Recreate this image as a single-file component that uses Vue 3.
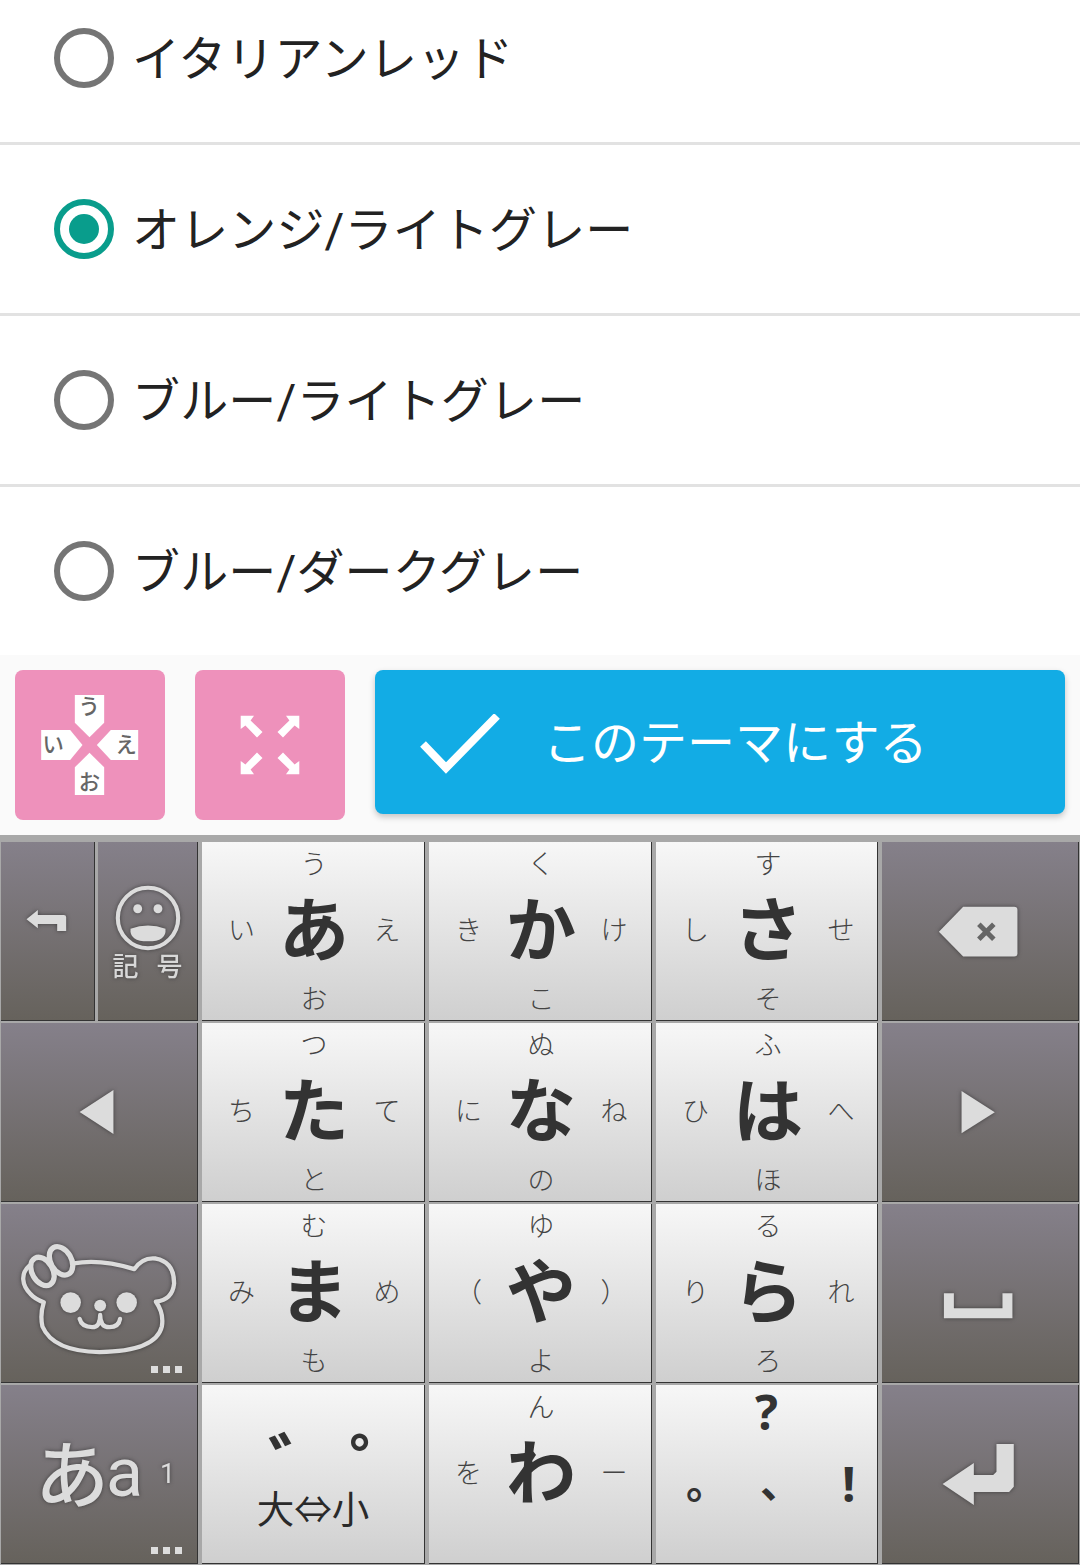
<script setup>
const themes = [
  { name: 'イタリアンレッド', on: false },
  { name: 'オレンジ/ライトグレー', on: true },
  { name: 'ブルー/ライトグレー', on: false },
  { name: 'ブルー/ダークグレー', on: false },
]
const k = (main, t, l, r, b) => ({ main, t, l, r, b })
const row1 = [k('あ', 'う', 'い', 'え', 'お'), k('か', 'く', 'き', 'け', 'こ'), k('さ', 'す', 'し', 'せ', 'そ')]
const row2 = [k('た', 'つ', 'ち', 'て', 'と'), k('な', 'ぬ', 'に', 'ね', 'の'), k('は', 'ふ', 'ひ', 'へ', 'ほ')]
const row3 = [k('ま', 'む', 'み', 'め', 'も'), k('や', 'ゆ', '（', '）', 'よ'), k('ら', 'る', 'り', 'れ', 'ろ')]
const wa = k('わ', 'ん', 'を', 'ー', '')
const arrow = 'M45.7 45.7H59L55.6 50.4L67.5 62L62 67.5L50.4 55.6L45.7 59Z'
</script>

<template>
  <div class="page">
    <ul class="list">
      <li v-for="t in themes" :key="t.name" class="row">
        <span class="radio" :class="{ on: t.on }"></span>
        <span class="label">{{ t.name }}</span>
      </li>
    </ul>

    <div class="toolbar">
      <div class="pink">
        <svg class="full" viewBox="45 60 435 450">
          <path class="w" d="M217 135H305V218L261 262L217 218Z" />
          <path class="w" d="M116 240H203L240 285L203 330H116Z" />
          <path class="w" d="M407 240V330H325L283 285L325 240Z" />
          <path class="w" d="M217 435V352L261 308L305 352V435Z" />
          <text class="flick" x="260" y="191">う</text>
          <text class="flick" x="152" y="307">い</text>
          <text class="flick" x="371" y="307">え</text>
          <text class="flick" x="261" y="420">お</text>
        </svg>
      </div>
      <div class="pink">
        <svg class="full" viewBox="0 0 150 150">
          <path class="w" :d="arrow" />
          <path class="w" :d="arrow" transform="translate(150 0) scale(-1 1)" />
          <path class="w" :d="arrow" transform="translate(0 150) scale(1 -1)" />
          <path class="w" :d="arrow" transform="translate(150 150) scale(-1 -1)" />
        </svg>
      </div>
      <button class="apply">
        <svg class="check" viewBox="0 0 80 62"><path d="M3 30L26 54L77 2" /></svg>
        <span class="applytext">このテーマにする</span>
      </button>
    </div>

    <div class="keyboard">
      <div class="pair">
        <div class="key dark">
          <svg class="full glow" viewBox="6 576 270 534">
            <path class="ic" d="M78 808L112 780V795H190Q197 795 197 802V843H170V822H112V835Z" />
          </svg>
        </div>
        <div class="key dark symbol">
          <svg class="smile glow" viewBox="329 703 204 204">
            <circle cx="431" cy="805" r="88" class="ring" />
            <circle cx="401" cy="778" r="13" class="ic" />
            <circle cx="460" cy="778" r="13" class="ic" />
            <path class="ic" d="M380 836Q431 818 482 836Q486 873 431 873Q376 873 380 836Z" />
          </svg>
          <span class="symtext glow"><span>記</span><span>号</span></span>
        </div>
      </div>

      <div v-for="x in row1" :key="x.main" class="key light kana">
        <span class="top">{{ x.t }}</span><span class="left">{{ x.l }}</span><b class="main">{{ x.main }}</b><span class="right">{{ x.r }}</span><span class="bottom">{{ x.b }}</span>
      </div>
      <div class="key dark">
        <svg class="full glow" viewBox="726 36 589 534">
          <path class="ic" d="M897 305L970 230H1123Q1133 230 1133 240V370Q1133 380 1123 380H970Z" />
          <path class="xx" d="M1017 283L1062 328M1062 283L1017 328" />
        </svg>
      </div>

      <div class="key dark">
        <svg class="full glow" viewBox="0 0 591 534">
          <path class="ic" d="M237 267L339 201V333Z" />
        </svg>
      </div>
      <div v-for="x in row2" :key="x.main" class="key light kana">
        <span class="top">{{ x.t }}</span><span class="left">{{ x.l }}</span><b class="main">{{ x.main }}</b><span class="right">{{ x.r }}</span><span class="bottom">{{ x.b }}</span>
      </div>
      <div class="key dark">
        <svg class="full glow" viewBox="726 579 589 534">
          <path class="ic" d="M965 783L1065 847L965 910Z" />
        </svg>
      </div>

      <div class="key dark">
        <svg class="full glow" viewBox="3 27 591 534">
          <g class="bear">
            <path d="M222 205Q300 190 405 222Q430 185 470 190Q525 200 525 265Q520 315 470 320Q495 355 488 395Q470 470 300 472Q160 470 128 395Q120 360 132 322Q105 312 92 297C65 270 62 235 88 212" />
            <path d="M240 372Q246 397 278 397Q302 397 302 360Q302 397 330 397Q358 397 362 372" />
            <ellipse class="bow" cx="128" cy="229" rx="46" ry="31" transform="rotate(60 128 229)" />
            <ellipse class="bow" cx="184" cy="197" rx="46" ry="31" transform="rotate(60 184 197)" />
          </g>
          <circle cx="213" cy="323" r="31" class="ic" />
          <circle cx="382" cy="323" r="31" class="ic" />
          <circle cx="302" cy="332" r="18" class="ic" />
        </svg>
        <span class="dots"><i></i><i></i><i></i></span>
      </div>
      <div v-for="x in row3" :key="x.main" class="key light kana">
        <span class="top">{{ x.t }}</span><span class="left">{{ x.l }}</span><b class="main">{{ x.main }}</b><span class="right">{{ x.r }}</span><span class="bottom">{{ x.b }}</span>
      </div>
      <div class="key dark">
        <svg class="full glow" viewBox="726 12 589 534">
          <path class="ic" d="M912 280H942V325H1088V280H1118V355H912Z" />
        </svg>
      </div>

      <div class="key dark lang">
        <span class="ja glow">あ</span><span class="la glow">a</span><span class="num glow">1</span>
        <span class="dots"><i></i><i></i><i></i></span>
      </div>
      <div class="key light marks">
        <div class="marktop"><b>゛</b><b>゜</b></div>
        <div class="sizes">大⇔小</div>
      </div>
      <div class="key light kana">
        <span class="top">{{ wa.t }}</span><span class="left">{{ wa.l }}</span><b class="main">{{ wa.main }}</b><span class="right">{{ wa.r }}</span><span class="bottom"></span>
      </div>
      <div class="key light punct">
        <b class="q">?</b>
        <div class="prow"><b>。</b><b>、</b><b class="ex">!</b></div>
      </div>
      <div class="key dark">
        <svg class="full glow" viewBox="726 555 589 534">
          <path class="ic" d="M908 852L1002 789V825H1060L1070 815V732H1122V860L1108 876H1002V915Z" />
        </svg>
      </div>
    </div>
  </div>
</template>

<style>
html, body { margin: 0; background: #fff; }
</style>

<style scoped>
.page {
  width: 1080px;
  height: 1565px;
  overflow: hidden;
  background: #fff;
  font-family: "Noto Sans CJK JP", "Noto Sans", sans-serif;
}
.list { list-style: none; margin: -26px 0 0; padding: 0; }
.row {
  height: 168px;
  display: flex;
  align-items: center;
  gap: 18px;
  padding-left: 54px;
  border-bottom: 3px solid #e2e2e2;
}
.row:last-child { border-bottom: 0; }
.radio {
  width: 60px;
  height: 60px;
  box-sizing: border-box;
  border: 6px solid #757575;
  border-radius: 50%;
  display: flex;
  align-items: center;
  justify-content: center;
}
.radio.on { border-color: #099d8c; }
.radio.on::after {
  content: "";
  width: 30px;
  height: 30px;
  border-radius: 50%;
  background: #099d8c;
}
.label {
  font-family: "Roboto", "Noto Sans CJK JP", sans-serif;
  font-size: 48px;
  line-height: 60px;
  letter-spacing: 0.15px;
  color: #222;
  padding-top: 4px;
}

.toolbar {
  height: 150px;
  padding: 15px;
  background: #fafafa;
  display: flex;
  align-items: flex-start;
  gap: 30px;
}
.pink { width: 150px; height: 150px; background: #ee91bb; border-radius: 8px; flex: none; }
.apply {
  flex: 1;
  height: 144px;
  border: 0;
  border-radius: 8px;
  background: #12ace5;
  box-shadow: 0 3px 6px rgba(0, 0, 0, 0.22);
  color: #fff;
  display: flex;
  align-items: center;
  padding: 0 0 0 45px;
  gap: 43px;
  font: inherit;
  font-size: 48px;
}
.applytext { padding-bottom: 6px; }
.check { width: 80px; height: 62px; flex: none; margin-top: 6px; }
.check path { fill: none; stroke: #fff; stroke-width: 8; }
.full { width: 100%; height: 100%; display: block; }
.w { fill: #fff; }
.flick { font-size: 64px; font-weight: 500; fill: #666; text-anchor: middle; font-family: "Noto Sans CJK JP", sans-serif; }

.keyboard {
  background: #a8a8a8;
  padding: 7px 0 1px 1px;
  height: 730px;
  box-sizing: border-box;
  display: grid;
  grid-template-columns: 197px 223px 223px 222px 197px;
  grid-template-rows: repeat(4, 179px);
  gap: 2px 4px;
}
.pair { display: grid; grid-template-columns: 94px 1fr; gap: 3px; min-height: 0; }
.key {
  position: relative;
  box-sizing: border-box;
  border-right: 1px solid #333;
  border-bottom: 1px solid #333;
  min-width: 0;
  min-height: 0;
}
.dark { background: linear-gradient(#85808a, #66625c); }
.light { background: linear-gradient(#f7f7f7, #cfcfcf); }
.glow { filter: drop-shadow(0 0 2px rgba(40, 40, 40, 0.7)); }
.ic { fill: #dcdcdc; }
.xx { fill: none; stroke: #666; stroke-width: 15; }
.ring { fill: none; stroke: #dcdcdc; stroke-width: 12; }
.bear path, .bear ellipse { fill: none; stroke: #dcdcdc; stroke-width: 13; stroke-linejoin: round; stroke-linecap: round; }
.bear ellipse.bow { stroke-width: 16; }

.symbol { display: flex; flex-direction: column; align-items: center; padding-top: 41px; }
.smile { width: 70px; height: 70px; flex: none; }
.symtext {
  display: flex;
  gap: 18px;
  font-size: 26px;
  line-height: 28px;
  font-weight: 500;
  color: #d8d8d8;
  margin-top: -2px;
}

.kana {
  display: grid;
  grid-template-columns: 79px 66px 80px;
  grid-template-rows: 40px 92px 1fr;
  color: #444;
  font-size: 27px;
  font-weight: 300;
}
.kana > * { display: flex; align-items: center; justify-content: center; white-space: nowrap; line-height: 1; }
.top { grid-area: 1 / 2; }
.left { grid-area: 2 / 1; }
.main { grid-area: 2 / 2; font-size: 70px; font-weight: 700; color: #333; padding-bottom: 4px; }
.right { grid-area: 2 / 3; }
.bottom { grid-area: 3 / 2; }

.dots { position: absolute; right: 15px; bottom: 9px; display: flex; gap: 5px; }
.dots i { width: 7px; height: 7px; background: #ddd; display: block; }

.lang {
  display: flex;
  align-items: flex-start;
  padding: 0 0 0 34px;
  color: #dcdcdc;
}
.ja { font-size: 74px; line-height: 80px; font-weight: 500; margin-top: 45px; }
.la { font-family: "Roboto", sans-serif; font-size: 68px; line-height: 80px; margin-top: 48px; margin-left: -3px; }
.num { font-family: "Roboto", sans-serif; font-size: 27px; line-height: 32px; margin-top: 73px; margin-left: 17px; }

.marks { display: flex; flex-direction: column; align-items: center; color: #333; }
.marktop {
  display: flex;
  gap: 11px;
  height: 50px;
  font-size: 72px;
  line-height: 50px;
  margin-top: 52px;
  margin-left: 61px;
}
.marktop b { width: 70px; text-align: center; }
.sizes { font-size: 37.5px; line-height: 40px; color: #2a2a2a; }

.punct { display: flex; flex-direction: column; color: #333; }
.q { font-size: 48px; line-height: 54px; text-align: center; font-family: "Noto Sans", sans-serif; }
.prow {
  display: flex;
  margin-top: 6px;
  height: 70px;
  align-items: center;
  font-size: 42px;
  line-height: 70px;
  padding-left: 30px;
}
.prow b { width: 74px; flex: none; }
.prow .ex { font-size: 48px; width: 20px; font-family: "Noto Sans", sans-serif; margin-left: 8px; margin-top: 8px; }
</style>
